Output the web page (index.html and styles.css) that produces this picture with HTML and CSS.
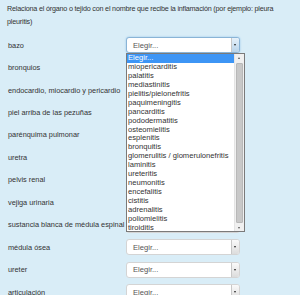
FILE: index.html
```html
<!DOCTYPE html>
<html>
<head>
    <link rel="stylesheet" href="styles.css">
</head>
<body>
    <div class="page">
        <p class="question">Relaciona el órgano o tejido con el nombre que recibe la inflamación (por ejemplo: pleura pleuritis)</p>
        <div class="answers">
            <div class="label">bazo</div>
            <div class="select focused"><span>Elegir...</span><i class="arrow"></i></div>
            <div class="label">bronquios</div>
            <div class="select"><span>Elegir...</span><i class="arrow"></i></div>
            <div class="label">endocardio, miocardio y pericardio</div>
            <div class="select"><span>Elegir...</span><i class="arrow"></i></div>
            <div class="label">piel arriba de las pezuñas</div>
            <div class="select"><span>Elegir...</span><i class="arrow"></i></div>
            <div class="label">parénquima pulmonar</div>
            <div class="select"><span>Elegir...</span><i class="arrow"></i></div>
            <div class="label">uretra</div>
            <div class="select"><span>Elegir...</span><i class="arrow"></i></div>
            <div class="label">pelvis renal</div>
            <div class="select"><span>Elegir...</span><i class="arrow"></i></div>
            <div class="label">vejiga urinaria</div>
            <div class="select"><span>Elegir...</span><i class="arrow"></i></div>
            <div class="label">sustancia blanca de médula espinal</div>
            <div class="select"><span>Elegir...</span><i class="arrow"></i></div>
            <div class="label">médula ósea</div>
            <div class="select"><span>Elegir...</span><i class="arrow"></i></div>
            <div class="label">ureter</div>
            <div class="select"><span>Elegir...</span><i class="arrow"></i></div>
            <div class="label">articulación</div>
            <div class="select"><span>Elegir...</span><i class="arrow"></i></div>
        </div>

        <div class="dropdown">
            <ul class="options">
                <li class="selected">Elegir...</li>
                <li>miopericarditis</li>
                <li>palatitis</li>
                <li>mediastinitis</li>
                <li>pielitis/pielonefritis</li>
                <li>paquimeningitis</li>
                <li>pancarditis</li>
                <li>pododermatitis</li>
                <li>osteomielitis</li>
                <li>esplenitis</li>
                <li>bronquitis</li>
                <li>glomerulitis / glomerulonefritis</li>
                <li>laminitis</li>
                <li>ureteritis</li>
                <li>neumonitis</li>
                <li>encefalitis</li>
                <li>cistitis</li>
                <li>adrenalitis</li>
                <li>poliomielitis</li>
                <li>tiroiditis</li>
            </ul>
            <div class="scrollbar">
                <div class="btn up"></div>
                <div class="track"><div class="thumb"></div></div>
                <div class="btn down"></div>
            </div>
        </div>
    </div>
</body>
</html>
```

FILE: styles.css
```css
body {
    margin: 0;
    background: #d9edf7;
    font-family: "Liberation Sans", Arial, sans-serif;
    color: #333;
}
.page {
    position: relative;
    padding: 2px 4px 0 8px;
}
.question {
    margin: 0 0 6px -1px;
    font-size: 7.2px;
    letter-spacing: -0.2px;
    line-height: 13px;
}
.answers {
    display: grid;
    grid-template-columns: 118px 114px;
    grid-auto-rows: 22.45px;
    align-items: center;
}
.label {
    font-size: 7.35px;
    white-space: nowrap;
}
.select {
    display: flex;
    align-items: center;
    height: 16px;
    box-sizing: border-box;
    background: #fff;
    border: 1px solid #d4d4d4;
    border-radius: 3px;
    font-size: 7.6px;
    color: #555;
}
.select span {
    flex: 1;
    padding-left: 6px;
}
.select.focused {
    border-color: #8ab4d6;
    box-shadow: 0 0 2px #8fc0e8;
}
.arrow {
    width: 7px;
    align-self: stretch;
    background: linear-gradient(#fafafa, #dcdcdc);
    border-left: 1px solid #c8c8c8;
    border-radius: 0 2px 2px 0;
    position: relative;
}
.arrow::after {
    content: "";
    position: absolute;
    left: 2px;
    top: 6px;
    border-left: 1.5px solid transparent;
    border-right: 1.5px solid transparent;
    border-top: 2px solid #222;
}
.focused .arrow {
    background: linear-gradient(#e6f1fa, #b9d4ea);
}
.dropdown {
    position: absolute;
    left: 126px;
    top: 53px;
    width: 119px;
    height: 179px;
    box-sizing: border-box;
    display: flex;
    background: #fff;
    border: 1px solid #7a7a7a;
}
.options {
    flex: 1;
    margin: 0;
    padding: 0;
    list-style: none;
    font-size: 7.6px;
    color: #333;
    overflow: hidden;
}
.options li {
    height: 8.95px;
    line-height: 8.95px;
    padding-left: 1px;
    white-space: nowrap;
}
.options li.selected {
    background: #3d95f5;
    color: #fff;
}
.scrollbar {
    width: 9px;
    display: flex;
    flex-direction: column;
    background: #f0f0f0;
    border-left: 1px solid #e4e4e4;
}
.btn {
    height: 8px;
    position: relative;
}
.btn::after {
    content: "";
    position: absolute;
    left: 3px;
    top: 3px;
    border-left: 1.5px solid transparent;
    border-right: 1.5px solid transparent;
}
.up::after {
    border-bottom: 2px solid #555;
}
.down::after {
    border-top: 2px solid #555;
}
.track {
    flex: 1;
    padding: 1px 1px;
}
.thumb {
    height: 160px;
    background: #c8c8c8;
    border: 1px solid #b8b8b8;
    box-sizing: border-box;
    border-radius: 1px;
}
```
